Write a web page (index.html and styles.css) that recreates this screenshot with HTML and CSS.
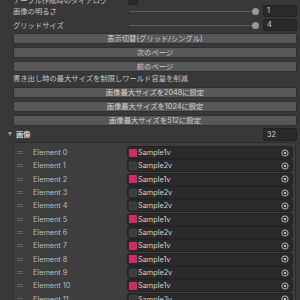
FILE: index.html
```html
<!DOCTYPE html>
<html lang="ja">
<head>
    <meta charset="UTF-8">
    <title>Inspector</title>
    <link rel="stylesheet" href="styles.css">
</head>
<body>
    <div class="inspector">
        <div class="row cut">
            <span class="label">テーブル作成時のダイアログ</span>
            <span class="checkbox"></span>
        </div>
        <div class="row slider-row">
            <span class="label">画像の明るさ</span>
            <div class="slider"><span class="track"></span><span class="knob"></span></div>
            <span class="field">1</span>
        </div>
        <div class="row slider-row second">
            <span class="label">グリッドサイズ</span>
            <div class="slider"><span class="track"></span><span class="knob"></span></div>
            <span class="field">4</span>
        </div>

        <button class="btn first">表示切替(グリッド/シングル)</button>
        <button class="btn">次のページ</button>
        <button class="btn">前のページ</button>
        <div class="note">書き出し時の最大サイズを制限しワールド容量を削減</div>
        <button class="btn after-note">画像最大サイズを2048に設定</button>
        <button class="btn">画像最大サイズを1024に設定</button>
        <button class="btn">画像最大サイズを512に設定</button>

        <div class="foldout">
            <span class="arrow"></span>
            <span class="foldout-title">画像</span>
            <span class="field count">32</span>
        </div>

        <div class="list" id="image-list">
            <!-- rows are generated below -->
        </div>
    </div>

    <script>
        const images = [
            { color: 'pink', name: 'Sample1v' },
            { color: 'gray', name: 'Sample2v' },
            { color: 'pink', name: 'Sample1v' },
            { color: 'gray', name: 'Sample2v' },
            { color: 'gray', name: 'Sample2v' },
            { color: 'pink', name: 'Sample1v' },
            { color: 'gray', name: 'Sample2v' },
            { color: 'pink', name: 'Sample1v' },
            { color: 'pink', name: 'Sample1v' },
            { color: 'gray', name: 'Sample2v' },
            { color: 'pink', name: 'Sample1v' },
            { color: 'gray', name: 'Sample2v' },
        ];

        const list = document.getElementById('image-list');

        images.forEach((img, i) => {
            const row = document.createElement('div');
            row.className = 'element';
            row.innerHTML = `
                <span class="handle"></span>
                <span class="element-name">Element ${i}</span>
                <span class="object-field">
                    <span class="swatch ${img.color}"></span>
                    <span class="object-name">${img.name}</span>
                    <svg class="picker" width="8" height="8" viewBox="0 0 8 8">
                        <circle cx="4" cy="4" r="3.1" fill="none" stroke="#b4b4b4" stroke-width="1"/>
                        <circle cx="4" cy="4" r="1.3" fill="#b4b4b4"/>
                    </svg>
                </span>`;
            list.appendChild(row);
        });
    </script>
</body>
</html>
```

FILE: styles.css
```css
body {
    margin: 0;
    padding: 0;
    background-color: #383838;
    font-family: Inter, "Noto Sans CJK JP", sans-serif;
    font-size: 7.3px;
    color: #c4c4c4;
    overflow: hidden;
}

.inspector {
    display: flex;
    flex-direction: column;
    padding: 0 3px 0 13px;
}

.row {
    display: flex;
    align-items: center;
    height: 12px;
}

.row .label {
    width: 117px;
    flex-shrink: 0;
    white-space: nowrap;
    overflow: hidden;
}

.cut {
    margin-top: -6px;
    height: 11px;
}

.checkbox {
    width: 8px;
    height: 8px;
    margin-left: -2px;
    background: #2a2a2a;
    border: 1px solid #232323;
    border-radius: 2px;
}

.slider-row.second {
    margin-top: 2px;
}

.slider {
    flex: 1;
    display: flex;
    align-items: center;
    margin-right: 4px;
}

.slider .track {
    flex: 1;
    height: 1px;
    background: #5e5e5e;
}

.slider .knob {
    width: 7px;
    height: 7px;
    margin-left: -1px;
    border-radius: 50%;
    background: #999999;
}

.field {
    width: 29px;
    height: 10px;
    line-height: 10px;
    padding-left: 3px;
    background: #2a2a2a;
    border: 1px solid #212121;
    border-radius: 2px;
    color: #d2d2d2;
}

.btn {
    height: 11px;
    margin: 3px 0 0 0;
    padding: 0;
    font: inherit;
    line-height: 9px;
    color: #d2d2d2;
    background: #585858;
    border: 1px solid #303030;
    border-radius: 2px;
    text-align: center;
}

.btn.first {
    margin-top: 2px;
}

.btn.after-note {
    margin-top: 1px;
}

.note {
    height: 14px;
    line-height: 14px;
    white-space: nowrap;
}

.foldout {
    display: flex;
    align-items: center;
    height: 14px;
    margin-top: 1px;
    margin-left: -8px;
}

.arrow {
    width: 0;
    height: 0;
    border-left: 2.5px solid transparent;
    border-right: 2.5px solid transparent;
    border-top: 4px solid #9a9a9a;
    margin-left: 3px;
    margin-right: 4px;
}

.foldout-title {
    flex: 1;
    font-weight: bold;
    color: #d2d2d2;
}

.foldout .count {
    height: 11px;
    line-height: 11px;
}

.list {
    margin: 1px 1px 0 0;
    padding-top: 3px;
    background: #3e3e3e;
    border: 1px solid #2c2c2c;
    border-radius: 3px 3px 0 0;
}

.element {
    display: flex;
    align-items: center;
    height: 13.33px;
}

.handle {
    width: 6px;
    height: 1px;
    margin: 0 10px 0 3px;
    background: #626262;
    box-shadow: 0 2px 0 #626262;
    position: relative;
    top: -1px;
}

.element-name {
    width: 94px;
    flex-shrink: 0;
    color: #bdbdbd;
}

.object-field {
    flex: 1;
    display: flex;
    align-items: center;
    height: 11px;
    margin-right: 2px;
    background: #2a2a2a;
    border: 1px solid #232323;
    border-radius: 3px;
    color: #d2d2d2;
}

.swatch {
    width: 8px;
    height: 8px;
    margin: 0 1px 0 1px;
    border-radius: 1px;
}

.swatch.pink {
    background: #d02c62;
}

.swatch.gray {
    background: #3a3a3a;
    border: 1px solid #444444;
    box-sizing: border-box;
}

.object-name {
    flex: 1;
}

.picker {
    margin-right: 3px;
}
```
